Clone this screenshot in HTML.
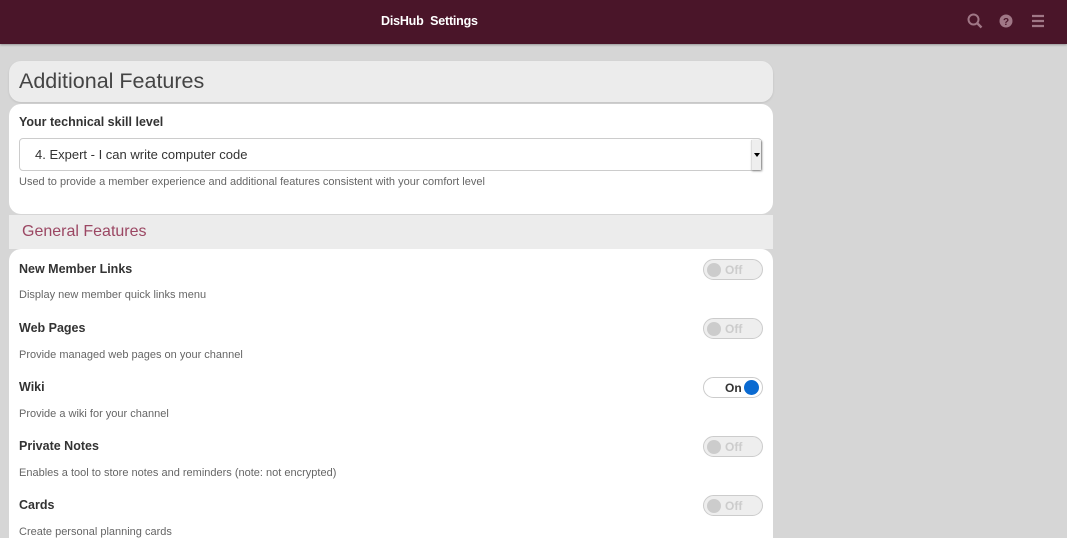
<!DOCTYPE html>
<html style="width:1067px;height:538px;overflow:hidden"><head><style>
*{box-sizing:border-box;margin:0;padding:0}
body{width:1067px;height:538px;overflow:hidden;background:#d6d6d6;font-family:"Liberation Sans",sans-serif;position:relative}
.hdr{position:absolute;left:0;top:0;width:1067px;height:44px;background:#4a1529;box-shadow:0 1px 2px rgba(0,0,0,.3)}
.brand{position:absolute;left:381px;top:14px;color:#fff;font-weight:bold;font-size:12.5px;letter-spacing:-0.2px}
.ic{position:absolute;top:13px}
.sec1{position:absolute;left:9px;top:61px;width:764px;height:41px;background:#ececec;border-radius:12px;box-shadow:0 1px 2px rgba(0,0,0,.1)}
.sec1 span{position:absolute;left:10px;top:8px;font-size:21.5px;color:#444}
.card1{position:absolute;left:9px;top:104px;width:764px;height:110px;background:#fff;border-radius:12px}
.lbl{position:absolute;left:10px;font-size:12.5px;font-weight:bold;color:#333}
.desc{position:absolute;left:10px;font-size:11px;color:#666}
.sel{position:absolute;left:10px;top:34px;width:743px;height:33px;border:1px solid #ccc;border-radius:4px;font-size:13px;color:#333;padding:8px 0 0 15px}
.arr{position:absolute;right:0;top:1px;width:10px;height:30px;background:#eee;border-left:1px solid #ddd;box-shadow:1px 1px 2px #888}
.arr:after{content:"";position:absolute;left:2px;top:13px;border:3px solid transparent;border-top:4px solid #000}
.sec2{position:absolute;left:9px;top:215px;width:764px;height:34px;background:#ececec}
.sec2 span{position:absolute;left:13px;top:8px;font-size:16px;color:#9b4763}
.card2{position:absolute;left:9px;top:249px;width:764px;height:289px;background:#fff;border-radius:12px 12px 0 0}
.tg{position:absolute;left:694px;width:60px;height:21px;border:1px solid #ccc;border-radius:11px;background:#eee;font-size:12px;font-weight:bold}
.tg.off{color:#ccc}
.tg.off i{position:absolute;left:3px;top:3px;width:14px;height:14px;border-radius:50%;background:#ccc}
.tg.off b{position:absolute;left:21px;top:3px}
.tg.on{background:#fff;color:#333}
.tg.on i{position:absolute;right:3px;top:2px;width:15px;height:15px;border-radius:50%;background:#0a6ad1}
.tg.on b{position:absolute;left:21px;top:3px}
</style></head><body>
<div class="hdr">
<div class="brand">DisHub&nbsp; Settings</div>
<svg class="ic" style="left:967px" width="16" height="16" viewBox="0 0 16 16"><circle cx="6.5" cy="6.5" r="5" fill="none" stroke="#a07786" stroke-width="2"/><path d="M10 10l4.5 4.5" stroke="#a07786" stroke-width="2.4"/></svg>
<svg class="ic" style="left:999px" width="14" height="16" viewBox="0 0 14 16"><circle cx="7" cy="8" r="6.5" fill="#a07786"/><text x="7" y="12" text-anchor="middle" font-size="10" font-weight="bold" fill="#4a1529" font-family="Liberation Sans">?</text></svg>
<svg class="ic" style="left:1031px" width="14" height="16" viewBox="0 0 14 16"><path d="M1 3h12M1 8h12M1 13h12" stroke="#a07786" stroke-width="2.2"/></svg>
</div>
<div class="sec1"><span>Additional Features</span></div>
<div class="card1">
<div class="lbl" style="top:11px">Your technical skill level</div>
<div class="sel">4. Expert - I can write computer code<div class="arr"></div></div>
<div class="desc" style="top:72px">Used to provide a member experience and additional features consistent with your comfort level</div>
</div>
<div class="sec2"><span>General Features</span></div>
<div class="card2">
<div class="lbl" style="top:13px">New Member Links</div><div class="desc" style="top:40px">Display new member quick links menu</div>
<div class="tg off" style="top:10px"><i></i><b>Off</b></div>
<div class="lbl" style="top:72px">Web Pages</div><div class="desc" style="top:100px">Provide managed web pages on your channel</div>
<div class="tg off" style="top:69px"><i></i><b>Off</b></div>
<div class="lbl" style="top:131px">Wiki</div><div class="desc" style="top:159px">Provide a wiki for your channel</div>
<div class="tg on" style="top:128px"><b>On</b><i></i></div>
<div class="lbl" style="top:190px">Private Notes</div><div class="desc" style="top:218px">Enables a tool to store notes and reminders (note: not encrypted)</div>
<div class="tg off" style="top:187px"><i></i><b>Off</b></div>
<div class="lbl" style="top:249px">Cards</div><div class="desc" style="top:277px">Create personal planning cards</div>
<div class="tg off" style="top:246px"><i></i><b>Off</b></div>
</div>
</body></html>
